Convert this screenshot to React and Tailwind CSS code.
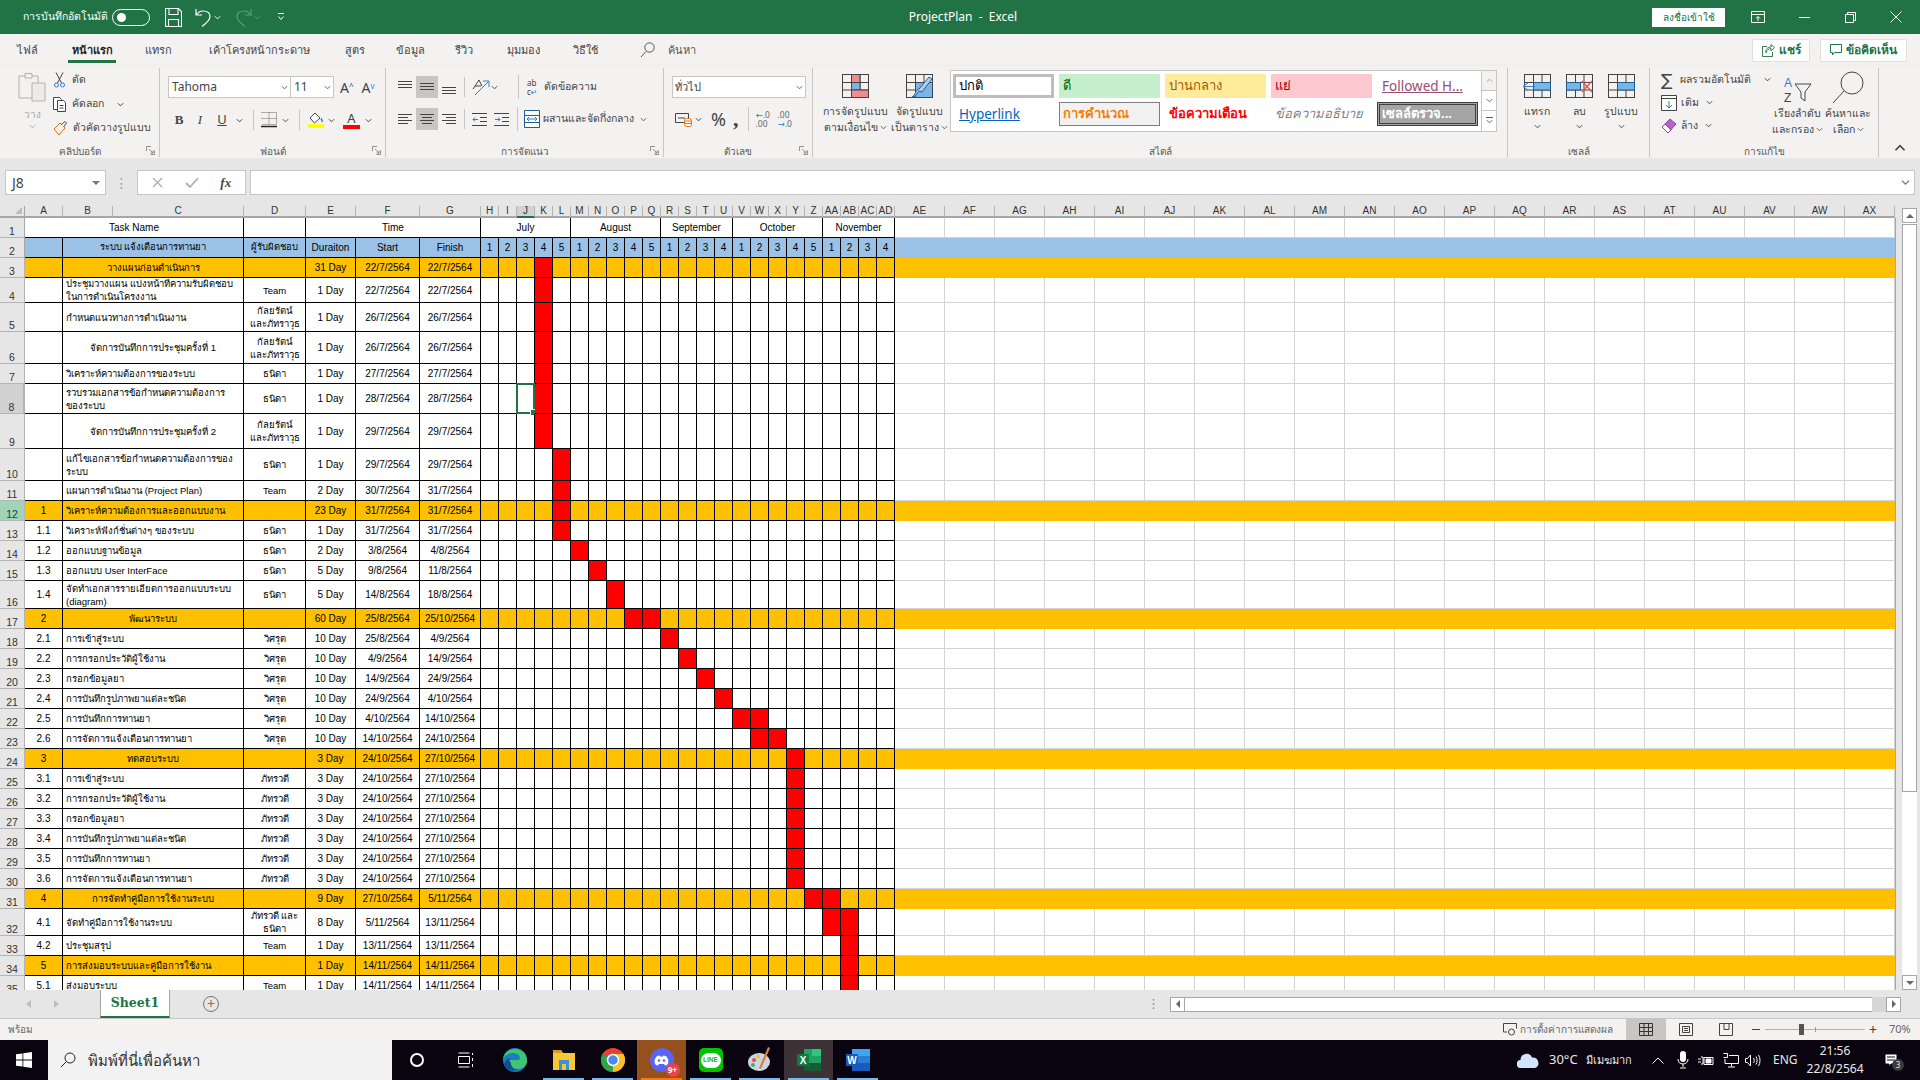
import React from "react";

const FONT = "font-['Noto_Sans','DejaVu_Sans',sans-serif]";

const colWidths = [38, 50, 131, 62, 50, 64, 61, ...Array(23).fill(18), ...Array(20).fill(50)];
const letters = [
  "A", "B", "C", "D", "E", "F", "G", "H", "I", "J", "K", "L", "M", "N", "O", "P", "Q", "R", "S", "T", "U", "V", "W", "X", "Y", "Z",
  "AA", "AB", "AC", "AD", "AE", "AF", "AG", "AH", "AI", "AJ", "AK", "AL", "AM", "AN", "AO", "AP", "AQ", "AR", "AS", "AT", "AU", "AV", "AW", "AX",
];
const weekNums = [1, 2, 3, 4, 5, 1, 2, 3, 4, 5, 1, 2, 3, 4, 1, 2, 3, 4, 5, 1, 2, 3, 4];

const KAN = "กัลยรัตน์\nและภัทราวุธ";
const TN = "ธนิดา";
const WS = "วิศรุต";
const PT = "ภัทรวดี";

// row, height, fill, no, task, align, owner, duration, start, finish, red columns (0 = H)
const rows = [
  [3, 20, 1, "", "วางแผนก่อนดำเนินการ", "c", "", "31 Day", "22/7/2564", "22/7/2564", [3]],
  [4, 25, 0, "", "ประชุมวางแผน แบ่งหน้าที่ความรับผิดชอบ\nในการดำเนินโครงงาน", "l", "Team", "1 Day", "22/7/2564", "22/7/2564", [3]],
  [5, 29, 0, "", "กำหนดแนวทางการดำเนินงาน", "l", KAN, "1 Day", "26/7/2564", "26/7/2564", [3]],
  [6, 32, 0, "", "จัดการบันทึกการประชุมครั้งที่ 1", "c", KAN, "1 Day", "26/7/2564", "26/7/2564", [3]],
  [7, 20, 0, "", "วิเคราะห์ความต้องการของระบบ", "l", TN, "1 Day", "27/7/2564", "27/7/2564", [3]],
  [8, 30, 0, "", "รวบรวมเอกสารข้อกำหนดความต้องการ\nของระบบ", "l", TN, "1 Day", "28/7/2564", "28/7/2564", [3]],
  [9, 35, 0, "", "จัดการบันทึกการประชุมครั้งที่ 2", "c", KAN, "1 Day", "29/7/2564", "29/7/2564", [3]],
  [10, 32, 0, "", "แก้ไขเอกสารข้อกำหนดความต้องการของ\nระบบ", "l", TN, "1 Day", "29/7/2564", "29/7/2564", [4]],
  [11, 20, 0, "", "แผนการดำเนินงาน (Project Plan)", "l", "Team", "2 Day", "30/7/2564", "31/7/2564", [4]],
  [12, 20, 1, "1", "วิเคราะห์ความต้องการและออกแบบงาน", "l", "", "23 Day", "31/7/2564", "31/7/2564", [4]],
  [13, 20, 0, "1.1", "วิเคราะห์ฟังก์ชั่นต่างๆ ของระบบ", "l", TN, "1 Day", "31/7/2564", "31/7/2564", [4]],
  [14, 20, 0, "1.2", "ออกแบบฐานข้อมูล", "l", TN, "2 Day", "3/8/2564", "4/8/2564", [5]],
  [15, 20, 0, "1.3", "ออกแบบ User InterFace", "l", TN, "5 Day", "9/8/2564", "11/8/2564", [6]],
  [16, 28, 0, "1.4", "จัดทำเอกสารรายเอียดการออกแบบระบบ\n(diagram)", "l", TN, "5 Day", "14/8/2564", "18/8/2564", [7]],
  [17, 20, 1, "2", "พัฒนาระบบ", "c", "", "60 Day", "25/8/2564", "25/10/2564", [8, 9]],
  [18, 20, 0, "2.1", "การเข้าสู่ระบบ", "l", WS, "10 Day", "25/8/2564", "4/9/2564", [10]],
  [19, 20, 0, "2.2", "การกรอกประวัติผู้ใช้งาน", "l", WS, "10 Day", "4/9/2564", "14/9/2564", [11]],
  [20, 20, 0, "2.3", "กรอกข้อมูลยา", "l", WS, "10 Day", "14/9/2564", "24/9/2564", [12]],
  [21, 20, 0, "2.4", "การบันทึกรูปภาพยาแต่ละชนิด", "l", WS, "10 Day", "24/9/2564", "4/10/2564", [13]],
  [22, 20, 0, "2.5", "การบันทึกการทานยา", "l", WS, "10 Day", "4/10/2564", "14/10/2564", [14, 15]],
  [23, 20, 0, "2.6", "การจัดการแจ้งเตือนการทานยา", "l", WS, "10 Day", "14/10/2564", "24/10/2564", [15, 16]],
  [24, 20, 1, "3", "ทดสอบระบบ", "c", "", "3 Day", "24/10/2564", "27/10/2564", [17]],
  [25, 20, 0, "3.1", "การเข้าสู่ระบบ", "l", PT, "3 Day", "24/10/2564", "27/10/2564", [17]],
  [26, 20, 0, "3.2", "การกรอกประวัติผู้ใช้งาน", "l", PT, "3 Day", "24/10/2564", "27/10/2564", [17]],
  [27, 20, 0, "3.3", "กรอกข้อมูลยา", "l", PT, "3 Day", "24/10/2564", "27/10/2564", [17]],
  [28, 20, 0, "3.4", "การบันทึกรูปภาพยาแต่ละชนิด", "l", PT, "3 Day", "24/10/2564", "27/10/2564", [17]],
  [29, 20, 0, "3.5", "การบันทึกการทานยา", "l", PT, "3 Day", "24/10/2564", "27/10/2564", [17]],
  [30, 20, 0, "3.6", "การจัดการแจ้งเตือนการทานยา", "l", PT, "3 Day", "24/10/2564", "27/10/2564", [17]],
  [31, 20, 1, "4", "การจัดทำคู่มือการใช้งานระบบ", "c", "", "9 Day", "27/10/2564", "5/11/2564", [18, 19]],
  [32, 27, 0, "4.1", "จัดทำคู่มือการใช้งานระบบ", "l", "ภัทรวดี และ\nธนิดา", "8 Day", "5/11/2564", "13/11/2564", [19, 20]],
  [33, 20, 0, "4.2", "ประชุมสรุป", "l", "Team", "1 Day", "13/11/2564", "13/11/2564", [20]],
  [34, 20, 1, "5", "การส่งมอบระบบและคู่มือการใช้งาน", "l", "", "1 Day", "14/11/2564", "14/11/2564", [20]],
  [35, 20, 0, "5.1", "ส่งมอบระบบ", "l", "Team", "1 Day", "14/11/2564", "14/11/2564", [20]],
];

const Chev = ({ className = "text-[#605e5c]", size = 7 }) => (
  <svg width={size} height={size} viewBox="0 0 8 8" className={`shrink-0 ${className}`} fill="none" stroke="currentColor" strokeWidth="1.1">
    <path d="M1 2.5 4 5.5 7 2.5" />
  </svg>
);

const Launcher = () => (
  <svg width="9" height="9" viewBox="0 0 9 9" className="absolute right-[4px] bottom-[2px] text-[#7a7a7a]" fill="none" stroke="currentColor">
    <path d="M.5 5V.5H5M8.5 4.5v4h-4M3 3l4 4M7 4.5V7H4.5" strokeWidth=".8" />
  </svg>
);

const Group = ({ w, label, launcher, children }) => (
  <div className="relative h-full shrink-0 pt-[2px] pb-[1px]" style={{ width: w }}>
    <div className="relative flex h-full flex-col border-r border-[#c8c6c4]">
      <div className="min-h-0 flex-1">{children}</div>
      <div className="h-[12px] text-center text-[10px] leading-[12px] text-[#5c5a58]">{label}</div>
      {launcher && <Launcher />}
    </div>
  </div>
);

const LinesIcon = ({ ys, xs }) => (
  <svg width="16" height="16" viewBox="0 0 16 16" stroke="#444" strokeWidth="1" fill="none">
    {ys.map((y, i) => (
      <path key={y} d={`M${xs[i][0]} ${y + 0.5}H${xs[i][1]}`} />
    ))}
  </svg>
);

const MiniGrid = ({ children, w = 32, h = 26 }) => (
  <svg width={w} height={h} viewBox="0 0 32 26" fill="none">
    {children}
  </svg>
);

const gridLines = (
  <g stroke="#444" strokeWidth="1">
    <rect x="3.5" y="1.5" width="26" height="23" fill="none" />
    <path d="M12.5 1.5v23M21 1.5v23M3.5 9.5h26M3.5 17h26" />
  </g>
);

const TitleBar = () => (
  <div className="flex h-[34px] shrink-0 items-center bg-[#217346] text-white">
    <span className="ml-[23px] w-[89px] text-[10.5px] whitespace-nowrap">การบันทึกอัตโนมัติ</span>
    <div className="flex h-[17px] w-[38px] items-center rounded-full border border-white pl-[4px]">
      <div className="h-[9px] w-[9px] rounded-full bg-white" />
    </div>
    <svg width="17" height="19" viewBox="0 0 17 19" className="ml-[15px]" fill="none" stroke="white" strokeWidth="1.1">
      <path d="M.5.5h13l3 3v15H.5zM4 .5v6h9v-6M3.5 18.5v-7h10v7" />
    </svg>
    <svg width="17" height="19" viewBox="0 0 17 19" className="ml-[13px]" fill="none" stroke="white" strokeWidth="1.2">
      <path d="M1 1v6h6M1.5 7C3 4 5 3 8 3c4 0 7 2 7 5.5 0 4-4 7-8 10" />
    </svg>
    <Chev className="ml-[2px] text-white" />
    <svg width="17" height="19" viewBox="0 0 17 19" className="ml-[14px]" fill="none" stroke="#5d9b7c" strokeWidth="1.2">
      <path d="M16 1v6h-6M15.5 7C14 4 12 3 9 3 5 3 2 5 2 8.5c0 4 4 7 8 10" />
    </svg>
    <Chev className="ml-[2px] text-[#5d9b7c]" />
    <svg width="8" height="8" viewBox="0 0 8 8" className="ml-[16px]" fill="none" stroke="white">
      <path d="M1 .5h6M1.5 3.5 4 6.5l2.5-3" />
    </svg>
    <div className="ml-[618px] w-[120px] text-center text-[12px] whitespace-nowrap">ProjectPlan&nbsp; - &nbsp;Excel</div>
    <div className="ml-[629px] flex h-[19px] w-[73px] items-center justify-center bg-white text-[10px] text-[#217346]">ลงชื่อเข้าใช้</div>
    <svg width="14" height="12" viewBox="0 0 14 12" className="ml-[26px]" fill="none" stroke="white">
      <path d="M.5.5h13v11H.5zM.5 3.5h13M7 10V5.5M5 7.5l2-2 2 2" />
    </svg>
    <div className="ml-[34px] h-px w-[11px] bg-white" />
    <svg width="11" height="11" viewBox="0 0 11 11" className="ml-[35px]" fill="none" stroke="white">
      <path d="M.5 2.5h8v8h-8zM2.5 2.5v-2h8v8h-2" />
    </svg>
    <svg width="12" height="12" viewBox="0 0 12 12" className="ml-[34px]" fill="none" stroke="white">
      <path d="M.5.5l11 11M11.5.5l-11 11" />
    </svg>
  </div>
);

const tabs = [
  ["ไฟล์", 17, 20],
  ["หน้าแรก", 31, 48],
  ["แทรก", 29, 27],
  ["เค้าโครงหน้ากระดาษ", 38, 99],
  ["สูตร", 36, 19],
  ["ข้อมูล", 32, 29],
  ["รีวิว", 30, 18],
  ["มุมมอง", 34, 33],
  ["วิธีใช้", 32, 26],
];

const TabsRow = () => (
  <div className="flex h-[32px] shrink-0 items-center bg-[#f3f2f1] text-[11px] text-[#444]">
    {tabs.map(([t, ml, w], i) => (
      <div
        key={t}
        className={`relative flex h-full items-center justify-center whitespace-nowrap ${i === 1 ? "font-bold text-[#222]" : ""}`}
        style={{ marginLeft: ml, width: w }}
      >
        {t}
        {i === 1 && <div className="absolute right-0 bottom-[3px] left-0 h-[3px] bg-[#217346]" />}
      </div>
    ))}
    <svg width="15" height="16" viewBox="0 0 15 16" className="ml-[42px]" fill="none" stroke="#555">
      <circle cx="9.5" cy="5.5" r="4.7" />
      <path d="M6 9.5 1 15" />
    </svg>
    <span className="ml-[13px] text-[#555]">ค้นหา</span>
    <div className="ml-auto flex h-[23px] w-[58px] items-center justify-center gap-[4px] rounded-[2px] border border-[#e1dfdd] bg-white text-[12px] font-bold text-[#217346]">
      <svg width="13" height="13" viewBox="0 0 13 13" fill="none" stroke="#217346">
        <path d="M5 2.5H.5v10h10V8M4 9c.5-3 3-4.500 5-4.500V7L12.500 3.500 9 .5V3C6 3 3 5 4 9Z" strokeWidth=".9" />
      </svg>
      แชร์
    </div>
    <div className="mr-[13px] ml-[10px] flex h-[23px] w-[87px] items-center justify-center gap-[4px] rounded-[2px] border border-[#e1dfdd] bg-white text-[12px] font-bold text-[#217346]">
      <svg width="12" height="12" viewBox="0 0 12 12" fill="none" stroke="#217346">
        <path d="M.5.5h11v8h-7l-2 2.500v-2.500h-2z" />
      </svg>
      ข้อคิดเห็น
    </div>
  </div>
);

const styleBox = "flex h-[24px] w-[101px] shrink-0 items-center whitespace-nowrap";

const Ribbon = () => (
  <div className="flex h-[92px] shrink-0 bg-[#f3f2f1] text-[#444] shadow-[0_2px_4px_rgba(0,0,0,.18)]">
    <Group w={160} label="คลิปบอร์ด" launcher>
      <div className="flex">
        <div className="ml-[17px] flex w-[30px] flex-col items-center pt-[4px] text-[#a8a6a4]">
          <svg width="28" height="30" viewBox="0 0 28 30" fill="#f3f2f1" stroke="#b3b1af">
            <path d="M1 4h19v22H1z" />
            <path d="M7 1.500h7V6H7z" />
            <path d="M14 11h13v18H14z" fill="#ecebea" />
          </svg>
          <span className="mt-[6px] text-[10px] leading-[12px]">วาง</span>
          <Chev className="mt-[3px] text-[#a8a6a4]" />
        </div>
        <div className="ml-[6px] flex flex-col text-[10.5px]">
          <div className="flex h-[24px] items-center gap-[6px]">
            <svg width="13" height="16" viewBox="0 0 13 16" fill="none" stroke="#444">
              <path d="M3 .5 8.500 11M10 .5 4.500 11" />
              <circle cx="3.500" cy="13" r="2" stroke="#2b7cd3" />
              <circle cx="9.500" cy="13" r="2" stroke="#2b7cd3" />
            </svg>
            ตัด
          </div>
          <div className="flex h-[24px] items-center gap-[6px]">
            <svg width="13" height="15" viewBox="0 0 13 15" fill="#fff" stroke="#444">
              <path d="M.5.500h6l2 2v10h-8z" />
              <path d="M4.500 3.500h6l2 2v9h-8z" />
              <path d="M6.500 8.500h4M6.500 11h4" />
            </svg>
            คัดลอก
            <Chev className="ml-[7px]" />
          </div>
          <div className="flex h-[24px] items-center gap-[6px] whitespace-nowrap">
            <svg width="14" height="15" viewBox="0 0 14 15" fill="none">
              <path d="M1 8 7 2l5 5-6 7z" stroke="#d9730d" fill="#fdf0e2" />
              <path d="M8 4 12 .5l1.500 1.500-3 4" stroke="#444" fill="#fff" />
            </svg>
            ตัวคัดวางรูปแบบ
          </div>
        </div>
      </div>
    </Group>
    <Group w={226} label="ฟอนต์" launcher>
      <div className="flex flex-col pt-[8px] pl-[8px]">
        <div className="flex h-[22px] items-center">
          <div className="flex h-full w-[123px] items-center justify-between border border-[#c8c6c4] bg-white pr-[2px] pl-[3px] text-[12px]">
            Tahoma
            <Chev />
          </div>
          <div className="flex h-full w-[43px] items-center justify-between border border-l-0 border-[#c8c6c4] bg-white pr-[2px] pl-[3px] text-[12px]">
            11
            <Chev />
          </div>
          <span className="ml-[6px] text-[14px]">
            A<sup className="text-[8px]">^</sup>
          </span>
          <span className="ml-[8px] text-[14px]">
            A<sup className="text-[8px] text-[#2b7cd3]">v</sup>
          </span>
        </div>
        <div className="mt-[12px] flex h-[20px] items-center text-[13px]">
          <span className="ml-[4px] w-[14px] text-center font-['Liberation_Serif',serif] font-bold">B</span>
          <span className="ml-[7px] w-[14px] text-center font-['Liberation_Serif',serif] italic">I</span>
          <span className="ml-[8px] w-[14px] text-center underline">U</span>
          <Chev className="ml-[7px]" />
          <div className="ml-[10px] h-[20px] w-px bg-[#c8c6c4]" />
          <svg width="16" height="16" viewBox="0 0 16 16" className="ml-[7px]" fill="none" stroke="#666">
            <path d="M.5.500h15v12H.5M8 .5v12M.5 6.500h15" strokeDasharray="1 1" />
            <path d="M0 14.500h16" stroke="#222" strokeWidth="1.500" />
          </svg>
          <Chev className="ml-[5px]" />
          <div className="ml-[10px] h-[20px] w-px bg-[#c8c6c4]" />
          <div className="ml-[8px] flex w-[16px] flex-col items-center">
            <svg width="14" height="12" viewBox="0 0 14 12" fill="#fff" stroke="#444">
              <path d="M6 1 1 6l4.500 5 5.500-5z" />
              <path d="M12 6.500c1 1.500 1.500 2.500 1 3.500" stroke="#2b7cd3" strokeWidth="1.500" />
            </svg>
            <div className="h-[4px] w-full bg-[#ffff00]" />
          </div>
          <Chev className="ml-[4px]" />
          <div className="ml-[8px] flex w-[17px] flex-col items-center">
            <span className="text-[13px] leading-[13px]">A</span>
            <div className="h-[4px] w-full bg-[#ff0000]" />
          </div>
          <Chev className="ml-[5px]" />
        </div>
      </div>
    </Group>
    <Group w={278} label="การจัดแนว" launcher>
      <div className="flex flex-col pt-[8px] pl-[8px]">
        <div className="flex h-[22px] items-center">
          <div className="flex h-[22px] w-[22px] items-center justify-center">
            <LinesIcon ys={[2, 5, 8]} xs={[[1, 15], [1, 15], [1, 15]]} />
          </div>
          <div className="flex h-[22px] w-[22px] items-center justify-center bg-[#c8c6c4]">
            <LinesIcon ys={[4, 7, 10]} xs={[[1, 15], [1, 15], [1, 15]]} />
          </div>
          <div className="flex h-[22px] w-[22px] items-center justify-center">
            <LinesIcon ys={[8, 11, 14]} xs={[[1, 15], [1, 15], [1, 15]]} />
          </div>
          <div className="mr-[7px] ml-[4px] h-[20px] w-px bg-[#c8c6c4]" />
          <svg width="18" height="18" viewBox="0 0 18 18" fill="none">
            <path d="M1 11 7 2l3 6M3 8h6" stroke="#444" />
            <path d="M3 17 16 4M11 3h6v6" stroke="#2b7cd3" />
          </svg>
          <Chev className="ml-[1px]" />
          <div className="mr-[8px] ml-[20px] h-[24px] w-px bg-[#c8c6c4]" />
          <span className="w-[17px] text-[8px] leading-[9px]">
            ab
            <br />
            c<span className="text-[#2b7cd3]">↵</span>
          </span>
          <span className="text-[10.5px] whitespace-nowrap">ตัดข้อความ</span>
        </div>
        <div className="mt-[10px] flex h-[22px] items-center">
          <div className="flex h-[22px] w-[22px] items-center justify-center">
            <LinesIcon ys={[3, 6, 9, 12]} xs={[[1, 15], [1, 11], [1, 15], [1, 11]]} />
          </div>
          <div className="flex h-[22px] w-[22px] items-center justify-center bg-[#c8c6c4]">
            <LinesIcon ys={[3, 6, 9, 12]} xs={[[1, 15], [3, 13], [1, 15], [3, 13]]} />
          </div>
          <div className="flex h-[22px] w-[22px] items-center justify-center">
            <LinesIcon ys={[3, 6, 9, 12]} xs={[[1, 15], [5, 15], [1, 15], [5, 15]]} />
          </div>
          <div className="mr-[7px] ml-[4px] h-[20px] w-px bg-[#c8c6c4]" />
          <svg width="15" height="13" viewBox="0 0 15 13" fill="none">
            <path d="M0 .5h15M8 4.500h7M8 8.500h7M0 12.500h15" stroke="#444" />
            <path d="M6 6.500H1M3 4.500l-2 2 2 2" stroke="#2b7cd3" />
          </svg>
          <svg width="15" height="13" viewBox="0 0 15 13" className="ml-[7px]" fill="none">
            <path d="M0 .5h15M8 4.500h7M8 8.500h7M0 12.500h15" stroke="#444" />
            <path d="M1 6.500h5M4 4.500l2 2-2 2" stroke="#2b7cd3" />
          </svg>
          <div className="mr-[6px] ml-[8px] h-[24px] w-px bg-[#c8c6c4]" />
          <svg width="16" height="18" viewBox="0 0 16 18" fill="#fff">
            <path d="M.5.500h15v17H.5z" stroke="#1f5f8f" />
            <path d="M.5 5.500h15M.5 12.500h15" stroke="#1f5f8f" />
            <path d="M3 9h10M5 7 3 9l2 2M11 7l2 2-2 2" stroke="#2b7cd3" />
          </svg>
          <span className="ml-[3px] w-[97px] text-[10.5px] whitespace-nowrap">ผสานและจัดกึ่งกลาง</span>
          <Chev />
        </div>
      </div>
    </Group>
    <Group w={149} label="ตัวเลข" launcher>
      <div className="flex flex-col pt-[8px] pl-[8px]">
        <div className="flex h-[22px] w-[134px] items-center justify-between border border-[#c8c6c4] bg-white pr-[2px] pl-[2px] text-[11px]">
          ทั่วไป
          <Chev />
        </div>
        <div className="mt-[10px] flex h-[22px] items-center">
          <svg width="17" height="16" viewBox="0 0 17 16" className="ml-[3px]" fill="none">
            <path d="M.5 2.500h13v9H.5zM3 7h7" stroke="#444" />
            <rect x="9.500" y="7.500" width="7" height="8" rx="2" stroke="#e3730c" fill="#fff" />
            <path d="M10 10h6M10 12.500h6" stroke="#e3730c" />
          </svg>
          <Chev className="ml-[3px]" />
          <span className="ml-[9px] w-[16px] text-[18px] leading-[18px] text-[#444]">%</span>
          <span className="ml-[6px] font-['Liberation_Serif',serif] text-[22px] leading-[14px] font-bold">,</span>
          <div className="mr-[7px] ml-[9px] h-[24px] w-px bg-[#c8c6c4]" />
          <span className="w-[20px] text-[8.5px] leading-[9px] text-[#666]">
            <span className="text-[#2b7cd3]">←</span>.0
            <br />
            .00
          </span>
          <span className="ml-[2px] w-[18px] text-[8.500px] leading-[9px] text-[#666]">
            .00
            <br />
            <span className="text-[#2b7cd3]">→</span>.0
          </span>
        </div>
      </div>
    </Group>
    <Group w={695} label="สไตล์">
      <div className="flex pt-[2px]">
        <div className="ml-[7px] flex w-[70px] shrink-0 flex-col items-center pt-[3px] text-[10.5px] leading-[16px] whitespace-nowrap">
          <MiniGrid>
            {gridLines}
            <rect x="12.500" y="1.500" width="8.500" height="8" fill="#f08b92" stroke="#444" />
            <rect x="12.500" y="9.500" width="8.500" height="7.500" fill="#7ab5e8" stroke="#444" />
            <rect x="12.500" y="17" width="17" height="7.500" fill="#f08b92" stroke="#444" />
          </MiniGrid>
          <span className="mt-[4px]">การจัดรูปแบบ</span>
          <span className="flex items-center gap-[2px]">
            ตามเงื่อนไข <Chev />
          </span>
        </div>
        <div className="flex w-[58px] shrink-0 flex-col items-center pt-[3px] text-[10.5px] leading-[16px] whitespace-nowrap">
          <MiniGrid>
            {gridLines}
            <rect x="12.500" y="9.500" width="17" height="15" fill="#7ab5e8" stroke="#444" />
            <path d="M29 6 19 19l-3-1c-2 1-1 5-7 6 3-1 4-8 7-8l10-12z" fill="#a9d0ef" stroke="#2b5f8f" />
          </MiniGrid>
          <span className="mt-[4px]">จัดรูปแบบ</span>
          <span className="flex items-center gap-[2px]">
            เป็นตาราง <Chev />
          </span>
        </div>
        <div className="ml-[2px] flex h-[62px] w-[547px] shrink-0 border border-[#c8c6c4] bg-white">
          <div className="flex flex-1 flex-col gap-[4px] pt-[3px] pl-[2px] text-[13px]">
            <div className="flex gap-[5px]">
              <div className={`${styleBox} border-[3px] border-[#bdbdbd] pl-[3px] text-black`}>ปกติ</div>
              <div className={`${styleBox} bg-[#c6efce] pl-[4px] text-[#006100]`}>ดี</div>
              <div className={`${styleBox} bg-[#ffeb9c] pl-[4px] text-[#9c5700]`}>ปานกลาง</div>
              <div className={`${styleBox} bg-[#ffc7ce] pl-[4px] text-[#9c0006]`}>แย่</div>
              <div className={`${styleBox} pl-[5px] text-[13.500px] text-[#954f72] underline`}>Followed H...</div>
            </div>
            <div className="flex gap-[5px]">
              <div className={`${styleBox} pl-[6px] text-[13.500px] text-[#0563c1] underline`}>Hyperlink</div>
              <div className={`${styleBox} border border-[#7f7f7f] bg-[#f2f2f2] pl-[3px] font-bold text-[#fa7d00]`}>การคำนวณ</div>
              <div className={`${styleBox} pl-[4px] font-bold text-[#ff0000]`}>ข้อความเตือน</div>
              <div className={`${styleBox} pl-[4px] text-[#7f7f7f] italic`}>ข้อความอธิบาย</div>
              <div className={`${styleBox} border-[3px] border-double border-[#3f3f3f] bg-[#a5a5a5] pl-[2px] font-bold text-white`}>เซลล์ตรวจ...</div>
            </div>
          </div>
          <div className="flex w-[15px] flex-col border-l border-[#c8c6c4]">
            <div className="flex h-[20px] items-center justify-center border-b border-[#c8c6c4] bg-[#f3f2f1]">
              <Chev className="rotate-180 text-[#a8a6a4]" />
            </div>
            <div className="flex h-[20px] items-center justify-center border-b border-[#c8c6c4]">
              <Chev />
            </div>
            <div className="flex h-[20px] flex-col items-center justify-center">
              <div className="h-px w-[7px] bg-[#605e5c]" />
              <Chev />
            </div>
          </div>
        </div>
      </div>
    </Group>
    <Group w={142} label="เซลล์">
      <div className="flex pt-[5px] pl-[8px] text-[10.5px]">
        <div className="flex w-[42px] flex-col items-center">
          <MiniGrid>
            {gridLines}
            <rect x="12.500" y="9.500" width="17" height="7.500" fill="#7ab5e8" stroke="#1f5f8f" />
            <path d="M14 13.500H3M7 10l-5 3.500L7 17" stroke="#2b7cd3" fill="none" />
          </MiniGrid>
          <span className="mt-[4px] leading-[16px]">แทรก</span>
          <Chev className="mt-[4px]" />
        </div>
        <div className="flex w-[42px] flex-col items-center">
          <MiniGrid>
            {gridLines}
            <rect x="3.500" y="9.500" width="14" height="7.500" fill="#7ab5e8" stroke="#1f5f8f" />
            <path d="m19 8 10 11M29 8 19 19" stroke="#e8524a" strokeWidth="1.300" />
          </MiniGrid>
          <span className="mt-[4px] leading-[16px]">ลบ</span>
          <Chev className="mt-[4px]" />
        </div>
        <div className="flex w-[42px] flex-col items-center">
          <MiniGrid w={32} h={26}>
            {gridLines}
            <rect x="12.500" y="9.500" width="17" height="7.500" fill="#7ab5e8" stroke="#1f5f8f" />
          </MiniGrid>
          <span className="mt-[4px] leading-[16px]">รูปแบบ</span>
          <Chev className="mt-[4px]" />
        </div>
      </div>
    </Group>
    <Group w={229} label="การแก้ไข">
      <div className="flex pl-[11px] text-[10.5px]">
        <div className="flex w-[111px] flex-col">
          <div className="flex h-[23px] items-center gap-[6px] whitespace-nowrap">
            <span className="w-[13px] text-[17px] leading-[17px] text-[#444]">∑</span>
            ผลรวมอัตโนมัติ
            <Chev className="ml-[7px]" />
          </div>
          <div className="flex h-[23px] items-center gap-[4px]">
            <svg width="16" height="16" viewBox="0 0 16 16" fill="#fff">
              <path d="M.5.500h15v15H.5z" stroke="#444" />
              <path d="M.5 3.500h15" stroke="#444" />
              <path d="M8 6v7M5 10l3 3 3-3" stroke="#2b7cd3" fill="none" />
            </svg>
            เติม
            <Chev className="ml-[3px]" />
          </div>
          <div className="flex h-[23px] items-center gap-[4px]">
            <svg width="16" height="16" viewBox="0 0 16 16">
              <path d="m1 9 8-8 6 5-8 9z" fill="#b565c9" stroke="#8f3fa8" />
              <path d="m4 6 6 6-3 3-6-6z" fill="#fff" stroke="#8f3fa8" />
            </svg>
            ล้าง
            <Chev className="ml-[3px]" />
          </div>
        </div>
        <div className="flex w-[51px] flex-col items-center pt-[7px] leading-[16px] whitespace-nowrap">
          <svg width="30" height="30" viewBox="0 0 30 30" fill="none">
            <text x="1" y="12" fontSize="12" fill="#2b7cd3" fontFamily="Liberation Sans">A</text>
            <text x="1" y="27" fontSize="12" fill="#444" fontFamily="Liberation Sans">Z</text>
            <path d="M12 9h16l-6 8v9l-4-3v-6z" stroke="#444" />
          </svg>
          <span>เรียงลำดับ</span>
          <span className="flex items-center gap-[2px]">
            และกรอง <Chev />
          </span>
        </div>
        <div className="ml-[1px] flex w-[48px] flex-col items-center pt-[3px] leading-[16px] whitespace-nowrap">
          <svg width="34" height="34" viewBox="0 0 34 34" fill="none" stroke="#444">
            <circle cx="21" cy="12" r="11" />
            <path d="M13 20 2 32" />
          </svg>
          <span>ค้นหาและ</span>
          <span className="flex items-center gap-[2px]">
            เลือก <Chev />
          </span>
        </div>
      </div>
    </Group>
    <div className="flex flex-1 items-end justify-center pb-[4px]">
      <Chev className="rotate-180 text-[#444]" size={12} />
    </div>
  </div>
);

const FormulaBar = () => (
  <div className="flex h-[48px] shrink-0 bg-[#e6e6e6] pt-[12px] text-[#444]">
    <div className="ml-[5px] flex h-[25px] w-[101px] items-center justify-between border border-[#c6c6c6] bg-white pr-[5px] pl-[6px] text-[14px]">
      J8
      <div className="h-0 w-0 border-x-[4px] border-t-[4px] border-x-transparent border-t-[#777]" />
    </div>
    <div className="flex h-[25px] w-[31px] items-center justify-center text-[14px] leading-[14px] text-[#999]">⋮</div>
    <div className="flex h-[25px] w-[109px] items-center justify-around border border-[#c6c6c6] bg-white px-[3px]">
      <svg width="11" height="11" viewBox="0 0 11 11" stroke="#b0b0b0" strokeWidth="1.400" fill="none">
        <path d="m1 1 9 9M10 1l-9 9" />
      </svg>
      <svg width="14" height="11" viewBox="0 0 14 11" stroke="#b0b0b0" strokeWidth="1.800" fill="none">
        <path d="m1 6 4 4 8-9" />
      </svg>
      <span className="font-['Liberation_Serif',serif] text-[13px] font-bold italic">fx</span>
    </div>
    <div className="ml-[4px] flex h-[25px] w-[1665px] items-center justify-end border border-[#c6c6c6] bg-white pr-[4px]">
      <Chev className="text-[#777]" size={9} />
    </div>
  </div>
);

const Corner = () => (
  <div className="flex h-full items-end justify-end pr-[2px] pb-[2px]">
    <div className="h-0 w-0 border-b-[7px] border-l-[7px] border-b-[#bdbdbd] border-l-transparent" />
  </div>
);

const Box = ({ h, children, className = "justify-center" }) => (
  <div className={`relative flex items-center overflow-hidden leading-[13px] whitespace-pre ${className}`} style={{ height: h - 1 }}>
    {children}
  </div>
);

const black = "border-r border-b border-black";

const SheetRow = ({ row }) => {
  const [n, h, fill, no, task, align, owner, dur, start, finish, red] = row;
  const bg = fill ? "bg-[#ffc000]" : "";
  const selected = n === 8;
  let head = "bg-[#e6e6e6] border-r border-[#a6a6a6]";
  if (selected) head = "bg-[#d2d2d2] border-r-2 border-[#217346]";
  if (n === 12) head = "bg-[#9fd5b7] border-r border-[#a6a6a6]";
  return (
    <tr>
      <th className={`border-b border-[#b4b4b4] p-0 align-bottom text-[10.500px] leading-[12px] font-normal text-[#333] ${head}`} style={{ height: h }}>
        {n}
      </th>
      <td className={`p-0 ${black} ${bg}`}>
        <Box h={h}>{no}</Box>
      </td>
      <td colSpan={2} className={`p-0 text-[9.500px] ${black} ${bg}`}>
        <Box h={h} className={align === "c" ? "justify-center text-center" : "justify-start pl-[3px]"}>
          <span>{task}</span>
        </Box>
      </td>
      <td className={`p-0 text-[9.500px] ${black} ${bg}`}>
        <Box h={h} className="justify-center text-center">
          <span>{owner}</span>
        </Box>
      </td>
      {[dur, start, finish].map((v, i) => (
        <td key={i} className={`p-0 ${black} ${bg}`}>
          <Box h={h}>{v}</Box>
        </td>
      ))}
      {weekNums.map((_, i) => (
        <td key={i} className={`relative p-0 ${black} ${red.includes(i) ? "bg-[#ff0000]" : bg}`}>
          {selected && i === 2 && (
            <div className="absolute -top-px -right-px -bottom-px -left-px border-2 border-[#217346]">
              <div className="absolute -right-[3px] -bottom-[3px] h-[5px] w-[5px] bg-[#217346] outline outline-1 outline-white" />
            </div>
          )}
        </td>
      ))}
      {fill ? (
        <td colSpan={20} className="bg-[#ffc000] p-0" />
      ) : (
        Array.from({ length: 20 }, (_, i) => <td key={i} className="border-r border-b border-[#d4d4d4] p-0" />)
      )}
    </tr>
  );
};

const Sheet = () => (
  <div className="relative flex min-h-0 flex-1 bg-[#e6e6e6]">
    <div className="h-full w-[1895px] shrink-0 overflow-hidden">
      <table className="w-[1895px] table-fixed border-separate border-spacing-0 bg-white font-['Liberation_Sans',sans-serif] text-[10px] text-black">
        <colgroup>
          <col className="w-[25px]" />
          {colWidths.map((w, i) => (
            <col key={i} style={{ width: w }} />
          ))}
        </colgroup>
        <tbody>
          <tr>
            <th className="h-[12px] border-r border-b-2 border-[#a6a6a6] bg-[#e6e6e6] p-0">
              <Corner />
            </th>
            {letters.map((l) => (
              <th
                key={l}
                className={`h-[12px] border-r p-0 text-center text-[10px] leading-[10px] font-normal text-[#333] ${
                  l === "J" ? "border-b-2 border-r-[#b4b4b4] border-b-[#217346] bg-[#d2d2d2]" : "border-b-2 border-r-[#b4b4b4] border-b-[#a6a6a6] bg-[#e6e6e6]"
                }`}
              >
                {l}
              </th>
            ))}
          </tr>
          <tr>
            <th className="h-[20px] border-r border-b border-r-[#a6a6a6] border-b-[#b4b4b4] bg-[#e6e6e6] p-0 align-bottom text-[10.500px] leading-[12px] font-normal text-[#333]">1</th>
            <td colSpan={3} className={`p-0 text-center ${black}`}>Task Name</td>
            <td className={`p-0 ${black}`} />
            <td colSpan={3} className={`p-0 text-center ${black}`}>Time</td>
            <td colSpan={5} className={`p-0 text-center ${black}`}>July</td>
            <td colSpan={5} className={`p-0 text-center ${black}`}>August</td>
            <td colSpan={4} className={`p-0 text-center ${black}`}>September</td>
            <td colSpan={5} className={`p-0 text-center ${black}`}>October</td>
            <td colSpan={4} className={`p-0 text-center ${black}`}>November</td>
            {Array.from({ length: 20 }, (_, i) => (
              <td key={i} className="border-r border-b border-[#d4d4d4] p-0" />
            ))}
          </tr>
          <tr>
            <th className="h-[20px] border-r border-b border-r-[#a6a6a6] border-b-[#b4b4b4] bg-[#e6e6e6] p-0 align-bottom text-[10.500px] leading-[12px] font-normal text-[#333]">2</th>
            <td className={`bg-[#9bc2e6] p-0 ${black}`} />
            <td colSpan={2} className={`bg-[#9bc2e6] p-0 text-center text-[9.500px] ${black}`}>ระบบ แจ้งเตือนการทานยา</td>
            <td className={`bg-[#9bc2e6] p-0 text-center text-[9.500px] ${black}`}>ผู้รับผิดชอบ</td>
            {["Duraiton", "Start", "Finish"].map((t) => (
              <td key={t} className={`bg-[#9bc2e6] p-0 text-center ${black}`}>{t}</td>
            ))}
            {weekNums.map((v, i) => (
              <td key={i} className={`bg-[#9bc2e6] p-0 text-center ${black}`}>{v}</td>
            ))}
            <td colSpan={20} className="bg-[#9bc2e6] p-0" />
          </tr>
          {rows.map((r) => (
            <SheetRow key={r[0]} row={r} />
          ))}
        </tbody>
      </table>
    </div>
    <div className="absolute top-[12px] bottom-0 left-[1895px] w-px bg-[#a6a6a6]" />
    <div className="ml-[7px] flex h-full w-[15px] flex-col pt-[2px]">
      <div className="flex h-[15px] items-center justify-center border border-[#a6a6a6] bg-white">
        <div className="h-0 w-0 border-x-[4px] border-b-[4px] border-x-transparent border-b-[#666]" />
      </div>
      <div className="flex-1 bg-white">
        <div className="mt-[1px] h-[568px] border border-[#a6a6a6] bg-white" />
      </div>
      <div className="flex h-[15px] items-center justify-center border border-[#a6a6a6] bg-white">
        <div className="h-0 w-0 border-x-[4px] border-t-[4px] border-x-transparent border-t-[#666]" />
      </div>
    </div>
  </div>
);

const SheetTabs = () => (
  <div className="flex h-[28px] shrink-0 items-center bg-[#e6e6e6]">
    <span className="ml-[26px] h-0 w-0 border-y-[4px] border-r-[5px] border-y-transparent border-r-[#bdbdbd]" />
    <span className="ml-[23px] h-0 w-0 border-y-[4px] border-l-[5px] border-y-transparent border-l-[#bdbdbd]" />
    <div className="ml-[41px] flex h-full w-[70px] items-center justify-center border-x border-[#a6a6a6] border-b-2 border-b-[#217346] bg-white font-['DejaVu_Serif',serif] text-[12.500px] font-bold text-[#217346]">
      Sheet1
    </div>
    <div className="ml-[33px] flex h-[16px] w-[16px] items-center justify-center rounded-full border border-[#777] text-[14px] leading-[14px] text-[#777]">+</div>
    <span className="ml-[928px] text-[13px] text-[#888]">⋮</span>
    <div className="ml-[10px] flex h-[15px] w-[15px] items-center justify-center border border-[#a6a6a6] bg-white">
      <div className="h-0 w-0 border-y-[4px] border-r-[4px] border-y-transparent border-r-[#666]" />
    </div>
    <div className="h-[15px] w-[687px] border-y border-[#a6a6a6] bg-white" />
    <div className="h-[15px] w-[14px] bg-[#d6d6d6]" />
    <div className="flex h-[15px] w-[15px] items-center justify-center border border-[#a6a6a6] bg-white">
      <div className="h-0 w-0 border-y-[4px] border-l-[4px] border-y-transparent border-l-[#666]" />
    </div>
  </div>
);

const StatusBar = () => (
  <div className="flex h-[22px] shrink-0 items-center border-t border-[#c8c6c4] bg-[#f3f2f1] text-[10px] text-[#666]">
    <span className="ml-[8px] w-[24px]">พร้อม</span>
    <svg width="14" height="13" viewBox="0 0 14 13" className="ml-[1471px]" fill="none" stroke="#444">
      <path d="M4 9H.5V.5h13v5" />
      <circle cx="8.500" cy="9" r="3" />
    </svg>
    <span className="ml-[3px] w-[106px] whitespace-nowrap">การตั้งค่าการแสดงผล</span>
    <div className="flex h-full w-[40px] items-center justify-center bg-[#c8c6c4]">
      <svg width="14" height="13" viewBox="0 0 14 13" fill="none" stroke="#333">
        <path d="M.5.500h13v12H.5zM5 .5v12M9.500 .5v12M.5 4.500h13M.5 8.500h13" />
      </svg>
    </div>
    <div className="flex h-full w-[40px] items-center justify-center">
      <svg width="14" height="13" viewBox="0 0 14 13" fill="none" stroke="#444">
        <path d="M.5.500h13v12H.5zM3.500 3.500h7v6h-7zM5 5.500h4M5 7.500h4" />
      </svg>
    </div>
    <div className="flex h-full w-[40px] items-center justify-center">
      <svg width="14" height="13" viewBox="0 0 14 13" fill="none" stroke="#444">
        <path d="M.5.500h13v12H.5M.5.500v12M5 .5v6h5v-6" />
      </svg>
    </div>
    <div className="ml-[6px] h-px w-[8px] bg-[#444]" />
    <div className="relative ml-[5px] h-px w-[100px] bg-[#b0b0b0]">
      <div className="absolute -top-[5px] left-[34px] h-[11px] w-[5px] bg-[#555]" />
      <div className="absolute -top-[2px] left-[50px] h-[5px] w-px bg-[#999]" />
    </div>
    <span className="ml-[4px] text-[14px] leading-[14px] text-[#444]">+</span>
    <span className="ml-[12px] text-[11px]">70%</span>
  </div>
);

const TaskIcon = ({ open, className = "", children }) => (
  <div className={`relative flex h-full w-[49px] shrink-0 items-center justify-center ${className}`}>
    {children}
    {open && <div className={`absolute inset-x-[4px] bottom-0 h-[2px] ${open}`} />}
  </div>
);

const Taskbar = () => (
  <div className="flex h-[40px] shrink-0 items-center bg-[#0a0410] text-white">
    <div className="flex h-full w-[48px] items-center justify-center">
      <svg width="16" height="16" viewBox="0 0 16 16" fill="white">
        <path d="M0 2.300 6.500 1.400v6.200H0zM7.300 1.300 16 0v7.600H7.300zM0 8.400h6.500v6.200L0 13.700zM7.300 8.400H16V16l-8.700-1.300z" />
      </svg>
    </div>
    <div className="flex h-full w-[344px] items-center bg-[#f2f2f2] text-[15px] text-[#333]">
      <svg width="16" height="16" viewBox="0 0 16 16" className="ml-[12px]" fill="none" stroke="#222">
        <circle cx="10" cy="6" r="5" />
        <path d="M6.500 9.500 1 15" />
      </svg>
      <span className="ml-[12px]">พิมพ์ที่นี่เพื่อค้นหา</span>
    </div>
    <TaskIcon>
      <div className="h-[14px] w-[14px] rounded-full border-2 border-white" />
    </TaskIcon>
    <TaskIcon>
      <svg width="16" height="16" viewBox="0 0 16 16" fill="none" stroke="white">
        <path d="M.5 1h11M.5 15h11M.5 4.500h11v7H.5zM14.500 1v2M14.500 6v3M14.500 12v3" />
      </svg>
    </TaskIcon>
    <TaskIcon>
      <svg width="24" height="24" viewBox="0 0 24 24">
        <circle cx="12" cy="12" r="12" fill="#1b7ec2" />
        <path d="M24 13c0-7-5-12-12-12C6 1 1 5 0 11c2-4 6-6 10-6 5 0 7 3 7 5 0 1-1 2-3 2H6c0 6 4 9 9 9 4 0 9-3 9-8" fill="#3fc46f" />
        <path d="M8 15c0 4 3 7 7 7-5 2-12 0-14-6 1-3 4-6 6-6-1 1-1 3 1 5z" fill="#0f4f98" />
      </svg>
    </TaskIcon>
    <TaskIcon open="bg-[#76b9ed]">
      <svg width="22" height="20" viewBox="0 0 22 20">
        <path d="M0 0h8l2 3h12v17H0z" fill="#f6c63b" />
        <path d="M0 0h8l2 3H0z" fill="#d49a1c" />
        <path d="M6 10h10v10H6z" fill="#3d8fd6" />
        <path d="M9 14h4v6H9z" fill="#f6c63b" />
      </svg>
    </TaskIcon>
    <TaskIcon open="bg-[#76b9ed]">
      <svg width="24" height="24" viewBox="0 0 24 24">
        <circle cx="12" cy="12" r="12" fill="#e34133" />
        <path d="M12 12 1.600 6A12 12 0 0 0 12 24z" fill="#2ea44f" />
        <path d="M12 12 12 24A12 12 0 0 0 22.400 6H12z" fill="#fbc02d" />
        <circle cx="12" cy="12" r="5.500" fill="#4a8bf0" stroke="white" strokeWidth="1.500" />
      </svg>
    </TaskIcon>
    <TaskIcon open="bg-[#f7780b]" className="bg-[#96501e]">
      <div className="relative flex h-[24px] w-[24px] items-center justify-center rounded-full bg-[#5865f2]">
        <svg width="15" height="11" viewBox="0 0 15 11" fill="white">
          <path d="M1 9C0 6 1 3 2.500 1.500 4 .8 5 .5 5.500.5l.5 1h3l.5-1c.5 0 1.500.3 3 1C14 3 15 6 14 9c-1 1-2.500 1.500-3 1.500l-1-1.500H5L4 10.500C3.500 10.500 2 10 1 9z" />
          <circle cx="5" cy="5.500" r="1.300" fill="#5865f2" />
          <circle cx="10" cy="5.500" r="1.300" fill="#5865f2" />
        </svg>
        <span className="absolute -right-[6px] -bottom-[5px] flex h-[14px] w-[14px] items-center justify-center rounded-full bg-[#ed4245] text-[8px] leading-[8px] font-bold">9+</span>
      </div>
    </TaskIcon>
    <TaskIcon open="bg-[#76b9ed]">
      <div className="flex h-[24px] w-[24px] items-center justify-center rounded-[5px] bg-[#06c100]">
        <div className="flex h-[15px] w-[20px] items-center justify-center rounded-full bg-white font-['Liberation_Sans',sans-serif] text-[6.500px] font-bold text-[#06c100]">LINE</div>
      </div>
    </TaskIcon>
    <TaskIcon open="bg-[#76b9ed]">
      <svg width="24" height="26" viewBox="0 0 24 26">
        <ellipse cx="11" cy="15" rx="11" ry="9" fill="#c9d6e6" />
        <circle cx="6" cy="13" r="2" fill="#e24b4b" />
        <circle cx="10" cy="9.500" r="2" fill="#f2c230" />
        <circle cx="5" cy="18" r="2" fill="#4caf50" />
        <path d="M22 1 13 22l-2-1L20 0z" fill="#d9823b" />
      </svg>
    </TaskIcon>
    <TaskIcon open="bg-[#76b9ed]" className="bg-[#3d3236]">
      <svg width="24" height="22" viewBox="0 0 24 22">
        <path d="M7 0h17v22H7z" fill="#21a366" />
        <path d="M15 0h9v7h-9z" fill="#33c481" />
        <path d="M7 14h17v8H7z" fill="#185c37" />
        <rect y="5" width="12" height="12" fill="#107c41" />
        <text x="6" y="14.500" textAnchor="middle" fontSize="10" fontWeight="700" fill="white" fontFamily="Liberation Sans">X</text>
      </svg>
    </TaskIcon>
    <TaskIcon open="bg-[#76b9ed]">
      <svg width="24" height="22" viewBox="0 0 24 22">
        <path d="M6 0h18v22H6z" fill="#2b7cd3" />
        <path d="M6 0h18v7H6z" fill="#41a5ee" />
        <path d="M6 14h18v8H6z" fill="#185abd" />
        <rect y="5" width="12" height="12" fill="#185abd" />
        <text x="6" y="14.500" textAnchor="middle" fontSize="10" fontWeight="700" fill="white" fontFamily="Liberation Sans">W</text>
      </svg>
    </TaskIcon>
    <div className="ml-auto flex h-full items-center text-[13px] text-[#e8e8e8]">
      <svg width="23" height="15" viewBox="0 0 23 15" fill="#cfe6fa">
        <path d="M4 15a4 4 0 0 1-.5-8A6 6 0 0 1 15 4.500 5.500 5.500 0 0 1 18 15z" />
      </svg>
      <span className="ml-[9px] w-[30px] whitespace-nowrap">30°C</span>
      <span className="ml-[7px] w-[50px] text-[11px] whitespace-nowrap">มีเมฆมาก</span>
      <svg width="12" height="7" viewBox="0 0 12 7" className="ml-[16px]" fill="none" stroke="white">
        <path d="m.5 6.500 5.500-5.500 5.500 5.500" />
      </svg>
      <svg width="12" height="18" viewBox="0 0 12 18" className="ml-[13px]" fill="white">
        <rect x="3" y="0" width="6" height="11" rx="3" />
        <path d="M1 8c0 3 2 5 5 5s5-2 5-5M6 13v3M3 17h6" fill="none" stroke="white" />
      </svg>
      <svg width="16" height="11" viewBox="0 0 16 11" className="ml-[9px]" fill="none" stroke="white">
        <path d="M6 2.500h9v7H6z" />
        <path d="M8 4h5v4H8z" fill="white" />
        <path d="M0 4h3M0 7h3M3 2h2v7H3" />
      </svg>
      <svg width="16" height="15" viewBox="0 0 16 15" className="ml-[9px]" fill="none" stroke="white">
        <path d="M.5.500h4v4h-4M6 2.500h9.500v8H2V6M8.500 10.500v3M5 14h7" />
      </svg>
      <svg width="16" height="13" viewBox="0 0 16 13" className="ml-[6px]" fill="none" stroke="white">
        <path d="M.5 4.500h2l3-3.500v11l-3-3.500h-2zM8.500 4c1 1.500 1 3.500 0 5M11 2.500c1.500 2.500 1.500 5.500 0 8M13.500 1c2 3 2 8 0 11" />
      </svg>
      <span className="ml-[12px] w-[24px] text-[12px]">ENG</span>
      <div className="ml-[12px] flex w-[52px] flex-col items-center text-[12px] leading-[18px] whitespace-nowrap">
        <span>21:56</span>
        <span>22/8/2564</span>
      </div>
      <div className="relative mr-[23px] ml-[24px]">
        <svg width="12" height="13" viewBox="0 0 12 13" fill="white" stroke="#0a0410">
          <path d="M0 0h12v10H6l-2 3v-3H0z" />
          <path d="M2 3h8M2 6h8" />
        </svg>
        <span className="absolute -right-[7px] -bottom-[4px] flex h-[12px] w-[12px] items-center justify-center rounded-full bg-[#3a3a3a] text-[8px] leading-[8px]">3</span>
      </div>
    </div>
  </div>
);

export default function App() {
  return (
    <div className={`flex h-[1080px] w-[1920px] flex-col overflow-hidden ${FONT}`}>
      <TitleBar />
      <TabsRow />
      <Ribbon />
      <FormulaBar />
      <Sheet />
      <SheetTabs />
      <StatusBar />
      <Taskbar />
    </div>
  );
}
